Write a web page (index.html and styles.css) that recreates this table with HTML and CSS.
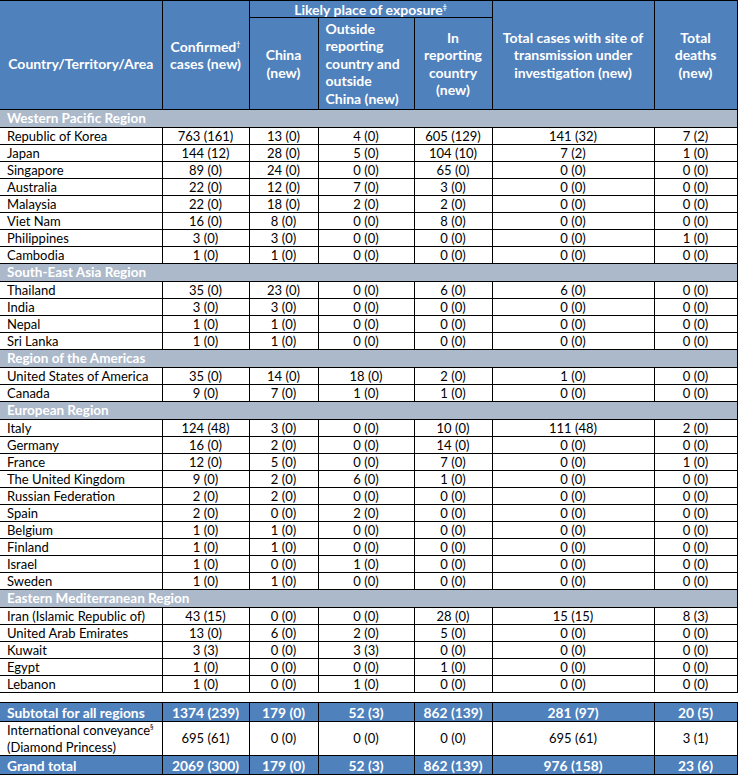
FILE: index.html
```html
<!DOCTYPE html>
<html lang="en">
<head>
<meta charset="utf-8">
<title>Cases table</title>
<link rel="stylesheet" href="styles.css">
</head>
<body>
<table class="cases">
<colgroup>
<col class="w-country"><col class="w-conf"><col class="w-china"><col class="w-outside"><col class="w-in"><col class="w-inv"><col class="w-deaths">
</colgroup>
<thead>
<tr class="h-top">
<th rowspan="2" class="th-country"><span class="country-label">Country/Territory/Area</span></th>
<th rowspan="2">Confirmed<sup>†</sup><br>cases (new)</th>
<th colspan="3" class="th-likely">Likely place of exposure<sup>‡</sup></th>
<th rowspan="2">Total cases with site of<br>transmission under<br>investigation (new)</th>
<th rowspan="2" class="th-last">Total<br>deaths<br>(new)</th>
</tr>
<tr class="h-sub">
<th>China<br>(new)</th>
<th class="th-left">Outside<br>reporting<br>country and<br>outside<br>China (new)</th>
<th>In<br>reporting<br>country<br>(new)</th>
</tr>
</thead>
<tbody>
<tr class="region"><td colspan="7">Western Pacific Region</td></tr>
<tr><td>Republic of Korea</td><td>763 (161)</td><td>13 (0)</td><td>4 (0)</td><td>605 (129)</td><td>141 (32)</td><td>7 (2)</td></tr>
<tr><td>Japan</td><td>144 (12)</td><td>28 (0)</td><td>5 (0)</td><td>104 (10)</td><td>7 (2)</td><td>1 (0)</td></tr>
<tr><td>Singapore</td><td>89 (0)</td><td>24 (0)</td><td>0 (0)</td><td>65 (0)</td><td>0 (0)</td><td>0 (0)</td></tr>
<tr><td>Australia</td><td>22 (0)</td><td>12 (0)</td><td>7 (0)</td><td>3 (0)</td><td>0 (0)</td><td>0 (0)</td></tr>
<tr><td>Malaysia</td><td>22 (0)</td><td>18 (0)</td><td>2 (0)</td><td>2 (0)</td><td>0 (0)</td><td>0 (0)</td></tr>
<tr><td>Viet Nam</td><td>16 (0)</td><td>8 (0)</td><td>0 (0)</td><td>8 (0)</td><td>0 (0)</td><td>0 (0)</td></tr>
<tr><td>Philippines</td><td>3 (0)</td><td>3 (0)</td><td>0 (0)</td><td>0 (0)</td><td>0 (0)</td><td>1 (0)</td></tr>
<tr><td>Cambodia</td><td>1 (0)</td><td>1 (0)</td><td>0 (0)</td><td>0 (0)</td><td>0 (0)</td><td>0 (0)</td></tr>
<tr class="region"><td colspan="7">South-East Asia Region</td></tr>
<tr><td>Thailand</td><td>35 (0)</td><td>23 (0)</td><td>0 (0)</td><td>6 (0)</td><td>6 (0)</td><td>0 (0)</td></tr>
<tr><td>India</td><td>3 (0)</td><td>3 (0)</td><td>0 (0)</td><td>0 (0)</td><td>0 (0)</td><td>0 (0)</td></tr>
<tr><td>Nepal</td><td>1 (0)</td><td>1 (0)</td><td>0 (0)</td><td>0 (0)</td><td>0 (0)</td><td>0 (0)</td></tr>
<tr><td>Sri Lanka</td><td>1 (0)</td><td>1 (0)</td><td>0 (0)</td><td>0 (0)</td><td>0 (0)</td><td>0 (0)</td></tr>
<tr class="region"><td colspan="7">Region of the Americas</td></tr>
<tr><td>United States of America</td><td>35 (0)</td><td>14 (0)</td><td>18 (0)</td><td>2 (0)</td><td>1 (0)</td><td>0 (0)</td></tr>
<tr><td>Canada</td><td>9 (0)</td><td>7 (0)</td><td>1 (0)</td><td>1 (0)</td><td>0 (0)</td><td>0 (0)</td></tr>
<tr class="region"><td colspan="7">European Region</td></tr>
<tr><td>Italy</td><td>124 (48)</td><td>3 (0)</td><td>0 (0)</td><td>10 (0)</td><td>111 (48)</td><td>2 (0)</td></tr>
<tr><td>Germany</td><td>16 (0)</td><td>2 (0)</td><td>0 (0)</td><td>14 (0)</td><td>0 (0)</td><td>0 (0)</td></tr>
<tr><td>France</td><td>12 (0)</td><td>5 (0)</td><td>0 (0)</td><td>7 (0)</td><td>0 (0)</td><td>1 (0)</td></tr>
<tr><td>The United Kingdom</td><td>9 (0)</td><td>2 (0)</td><td>6 (0)</td><td>1 (0)</td><td>0 (0)</td><td>0 (0)</td></tr>
<tr><td>Russian Federation</td><td>2 (0)</td><td>2 (0)</td><td>0 (0)</td><td>0 (0)</td><td>0 (0)</td><td>0 (0)</td></tr>
<tr><td>Spain</td><td>2 (0)</td><td>0 (0)</td><td>2 (0)</td><td>0 (0)</td><td>0 (0)</td><td>0 (0)</td></tr>
<tr><td>Belgium</td><td>1 (0)</td><td>1 (0)</td><td>0 (0)</td><td>0 (0)</td><td>0 (0)</td><td>0 (0)</td></tr>
<tr><td>Finland</td><td>1 (0)</td><td>1 (0)</td><td>0 (0)</td><td>0 (0)</td><td>0 (0)</td><td>0 (0)</td></tr>
<tr><td>Israel</td><td>1 (0)</td><td>0 (0)</td><td>1 (0)</td><td>0 (0)</td><td>0 (0)</td><td>0 (0)</td></tr>
<tr><td>Sweden</td><td>1 (0)</td><td>1 (0)</td><td>0 (0)</td><td>0 (0)</td><td>0 (0)</td><td>0 (0)</td></tr>
<tr class="region"><td colspan="7">Eastern Mediterranean Region</td></tr>
<tr><td>Iran (Islamic Republic of)</td><td>43 (15)</td><td>0 (0)</td><td>0 (0)</td><td>28 (0)</td><td>15 (15)</td><td>8 (3)</td></tr>
<tr><td>United Arab Emirates</td><td>13 (0)</td><td>6 (0)</td><td>2 (0)</td><td>5 (0)</td><td>0 (0)</td><td>0 (0)</td></tr>
<tr><td>Kuwait</td><td>3 (3)</td><td>0 (0)</td><td>3 (3)</td><td>0 (0)</td><td>0 (0)</td><td>0 (0)</td></tr>
<tr><td>Egypt</td><td>1 (0)</td><td>0 (0)</td><td>0 (0)</td><td>1 (0)</td><td>0 (0)</td><td>0 (0)</td></tr>
<tr><td>Lebanon</td><td>1 (0)</td><td>0 (0)</td><td>1 (0)</td><td>0 (0)</td><td>0 (0)</td><td>0 (0)</td></tr>
<tr class="spacer"><td colspan="7"></td></tr>
<tr class="total"><td>Subtotal for all regions</td><td>1374 (239)</td><td>179 (0)</td><td>52 (3)</td><td>862 (139)</td><td>281 (97)</td><td>20 (5)</td></tr>
<tr class="conveyance"><td>International conveyance<sup>§</sup><br>(Diamond Princess)</td><td>695 (61)</td><td>0 (0)</td><td>0 (0)</td><td>0 (0)</td><td>695 (61)</td><td>3 (1)</td></tr>
<tr class="total"><td>Grand total</td><td>2069 (300)</td><td>179 (0)</td><td>52 (3)</td><td>862 (139)</td><td>976 (158)</td><td>23 (6)</td></tr>
</tbody>
</table>
</body>
</html>
```

FILE: styles.css
```css
html, body {
  margin: 0;
  padding: 0;
  background: #ffffff;
}

.cases {
  border-collapse: collapse;
  table-layout: fixed;
  width: 737px;
  font-family: Lato, "Open Sans", sans-serif;
  font-size: 13px;
  color: #000000;
}

.w-country { width: 162px; }
.w-conf { width: 87px; }
.w-china { width: 69px; }
.w-outside { width: 96px; }
.w-in { width: 78px; }
.w-inv { width: 162px; }
.w-deaths { width: 83px; }

.cases th,
.cases td {
  padding: 0;
  border: 1px solid #000000;
  text-align: center;
  vertical-align: middle;
  white-space: nowrap;
}

.cases th:first-child,
.cases td:first-child {
  border-left: none;
}

.cases thead th {
  background: #4f81bd;
  color: #ffffff;
  font-weight: 700;
  font-size: 14px;
  line-height: 17.5px;
}

.h-top { height: 17px; }
.h-sub { height: 92px; }

.th-likely { line-height: 15px !important; }
.th-country .country-label { display: inline-block; padding-top: 18px; }
.th-left { text-align: left !important; padding-left: 7px !important; }

.cases sup {
  font-size: 7px;
  line-height: 0;
  vertical-align: 5px;
}

.cases tbody td {
  height: 16px;
  line-height: 15px;
}

.cases tbody td:first-child {
  text-align: left;
  padding-left: 7px;
}

.cases tbody tr.region td {
  height: 17px;
  background: #acb9ca;
  color: #ffffff;
  font-weight: 700;
  font-size: 13.5px;
}

.cases tbody tr.spacer td {
  height: 9px;
  border-left: none;
  border-right: none;
}

.cases tbody tr.total td {
  height: 18px;
  background: #4f81bd;
  color: #ffffff;
  font-weight: 700;
  font-size: 13.8px;
}

.cases tbody tr.conveyance td {
  height: 31px;
  line-height: 16.5px;
}
```
